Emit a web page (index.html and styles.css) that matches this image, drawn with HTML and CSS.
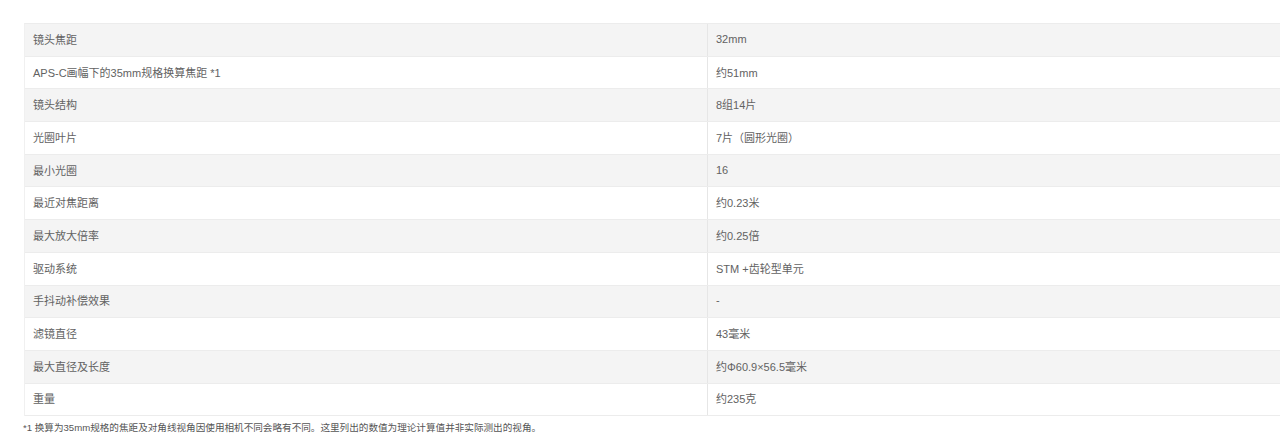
FILE: index.html
```html
<!DOCTYPE html>
<html lang="zh-CN">
<head>
<meta charset="utf-8">
<title>规格</title>
<link rel="stylesheet" href="styles.css">
</head>
<body>
<div class="page">
  <div class="spec">
    <div class="row odd"><div class="cell k">镜头焦距</div><div class="cell v">32mm</div></div>
    <div class="row"><div class="cell k">APS-C画幅下的35mm规格换算焦距 *1</div><div class="cell v">约51mm</div></div>
    <div class="row odd"><div class="cell k">镜头结构</div><div class="cell v">8组14片</div></div>
    <div class="row"><div class="cell k">光圈叶片</div><div class="cell v">7片（圆形光圈）</div></div>
    <div class="row odd"><div class="cell k">最小光圈</div><div class="cell v">16</div></div>
    <div class="row"><div class="cell k">最近对焦距离</div><div class="cell v">约0.23米</div></div>
    <div class="row odd"><div class="cell k">最大放大倍率</div><div class="cell v">约0.25倍</div></div>
    <div class="row"><div class="cell k">驱动系统</div><div class="cell v">STM +齿轮型单元</div></div>
    <div class="row odd"><div class="cell k">手抖动补偿效果</div><div class="cell v">-</div></div>
    <div class="row"><div class="cell k">滤镜直径</div><div class="cell v">43毫米</div></div>
    <div class="row odd"><div class="cell k">最大直径及长度</div><div class="cell v">约Φ60.9×56.5毫米</div></div>
    <div class="row"><div class="cell k">重量</div><div class="cell v">约235克</div></div>
  </div>
  <p class="note">*1 换算为35mm规格的焦距及对角线视角因使用相机不同会略有不同。这里列出的数值为理论计算值并非实际测出的视角。</p>
</div>
</body>
</html>
```

FILE: styles.css
```css
html, body {
  margin: 0;
  padding: 0;
  background: #fff;
  overflow: hidden;
}
body {
  font-family: "Liberation Sans", "Noto Sans CJK SC", sans-serif;
  color: #626262;
  font-size: 11px;
}
.page {
  padding: 23px 0 0 24px;
}
.spec {
  width: 1280px;
  border-top: 1px solid #ececec;
  border-left: 1px solid #f0f0f0;
}
.row {
  display: grid;
  grid-template-columns: 683px 1fr;
  height: 32.7px;
  box-sizing: border-box;
  border-bottom: 1px solid #ececec;
  background: #fff;
}
.row.odd {
  background: #f4f4f4;
}
.cell {
  display: flex;
  align-items: center;
  padding-left: 8px;
  padding-bottom: 2px;
  white-space: nowrap;
}
.cell.k {
  border-right: 1px solid #e6e6e6;
}
.note {
  margin: 4px 0 0 -1px;
  font-size: 9.6px;
  color: #555;
}
```
